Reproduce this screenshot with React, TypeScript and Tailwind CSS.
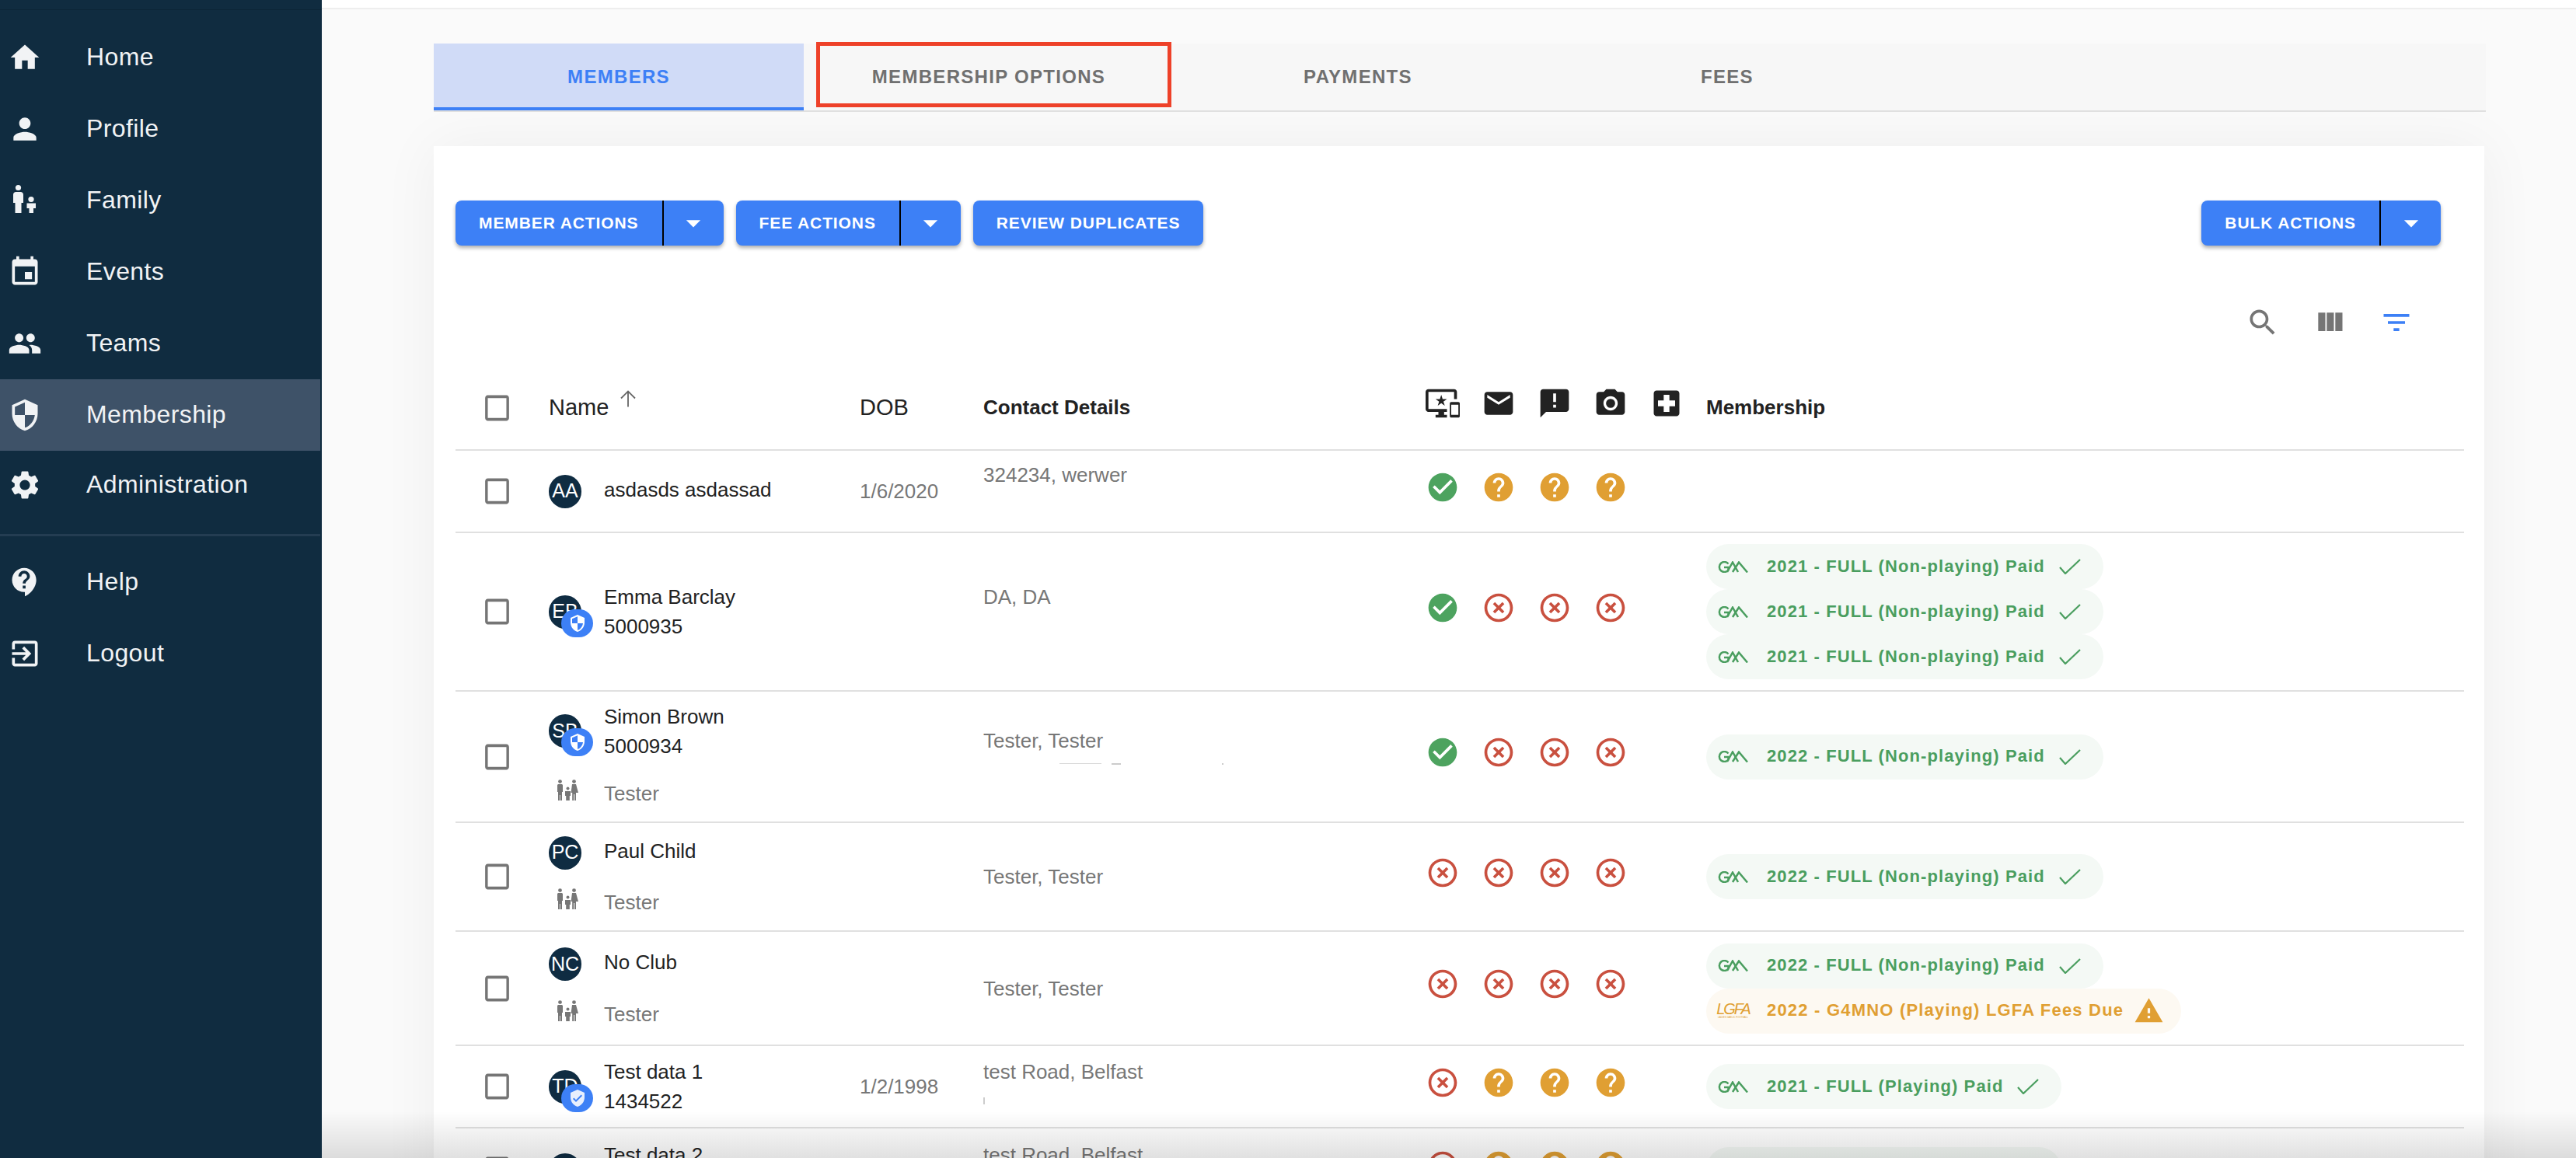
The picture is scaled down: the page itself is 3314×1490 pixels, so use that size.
import React from "react";

const P = {
  home: "M10 20v-6h4v6h5v-8h3L12 3 2 12h3v8z",
  person: "M12 12c2.21 0 4-1.79 4-4s-1.79-4-4-4-4 1.79-4 4 1.79 4 4 4zm0 2c-2.67 0-8 1.34-8 4v2h16v-2c0-2.66-5.33-4-8-4z",
  event: "M17 12h-5v5h5v-5zM16 1v2H8V1H6v2H5c-1.11 0-1.99.9-1.99 2L3 19c0 1.1.89 2 2 2h14c1.1 0 2-.9 2-2V5c0-1.1-.9-2-2-2h-1V1h-2zm3 18H5V8h14v11z",
  people: "M16 11c1.66 0 2.99-1.34 2.99-3S17.66 5 16 5c-1.66 0-3 1.34-3 3s1.34 3 3 3zm-8 0c1.66 0 2.99-1.34 2.99-3S9.66 5 8 5C6.34 5 5 6.34 5 8s1.34 3 3 3zm0 2c-2.33 0-7 1.17-7 3.5V19h14v-2.5c0-2.33-4.67-3.5-7-3.5zm8 0c-.29 0-.62.02-.97.05 1.16.84 1.97 1.97 1.97 3.45V19h6v-2.5c0-2.33-4.67-3.5-7-3.5z",
  security: "M12 1L3 5v6c0 5.55 3.84 10.74 9 12 5.16-1.26 9-6.45 9-12V5l-9-4zm0 10.99h7c-.53 4.12-3.28 7.79-7 8.94V12H5V6.3l7-3.11v8.8z",
  settings: "M19.14 12.94c.04-.3.06-.61.06-.94 0-.32-.02-.64-.07-.94l2.03-1.58c.18-.14.23-.41.12-.61l-1.92-3.32c-.12-.22-.37-.29-.59-.22l-2.39.96c-.5-.38-1.03-.7-1.62-.94l-.36-2.54c-.04-.24-.24-.41-.48-.41h-3.84c-.24 0-.43.17-.47.41l-.36 2.54c-.59.24-1.13.57-1.62.94l-2.39-.96c-.22-.08-.47 0-.59.22L2.74 8.87c-.12.21-.08.47.12.61l2.03 1.58c-.05.3-.09.63-.09.94s.02.64.07.94l-2.03 1.58c-.18.14-.23.41-.12.61l1.92 3.32c.12.22.37.29.59.22l2.39-.96c.5.38 1.03.7 1.62.94l.36 2.54c.05.24.24.41.48.41h3.84c.24 0 .44-.17.47-.41l.36-2.54c.59-.24 1.13-.56 1.62-.94l2.39.96c.22.08.47 0 .59-.22l1.92-3.32c.12-.22.07-.47-.12-.61l-2.01-1.58zM12 15.6c-1.98 0-3.6-1.62-3.6-3.6s1.62-3.6 3.6-3.6 3.6 1.62 3.6 3.6-1.62 3.6-3.6 3.6z",
  help: "M11.5 2C6.81 2 3 5.81 3 10.5S6.81 19 11.5 19h.5v3c4.86-2.34 8-7 8-11.5C20 5.81 16.19 2 11.5 2zm1 14.5h-2v-2h2v2zm0-3.5h-2c0-3.25 3-3 3-5 0-1.1-.9-2-2-2s-2 .9-2 2h-2c0-2.21 1.79-4 4-4s4 1.79 4 4c0 2.5-3 2.75-3 5z",
  exit: "M10.09 15.59L11.5 17l5-5-5-5-1.41 1.41L12.67 11H3v2h9.67l-2.58 2.59zM19 3H5c-1.11 0-2 .9-2 2v4h2V5h14v14H5v-4H3v4c0 1.1.89 2 2 2h14c1.1 0 2-.9 2-2V5c0-1.1-.9-2-2-2z",
  search: "M15.5 14h-.79l-.28-.27C15.41 12.59 16 11.11 16 9.5 16 5.91 13.09 3 9.5 3S3 5.91 3 9.5 5.91 16 9.5 16c1.61 0 3.09-.59 4.23-1.57l.27.28v.79l5 4.99L20.49 19l-4.99-5zm-6 0C7.01 14 5 11.99 5 9.5S7.01 5 9.5 5 14 7.01 14 9.5 11.99 14 9.5 14z",
  columns: "M10 18h5V5h-5v13zm-6 0h5V5H4v13zM16 5v13h5V5h-5z",
  filter: "M10 18h4v-2h-4v2zM3 6v2h18V6H3zm3 7h12v-2H6v2z",
  caret: "M7 10l5 5 5-5z",
  ok: "M12 2C6.48 2 2 6.48 2 12s4.48 10 10 10 10-4.48 10-10S17.52 2 12 2zm-2 15l-5-5 1.41-1.41L10 14.17l7.59-7.59L19 8l-9 9z",
  q: "M12 2C6.48 2 2 6.48 2 12s4.48 10 10 10 10-4.48 10-10S17.52 2 12 2zm1 17h-2v-2h2v2zm2.07-7.75l-.9.92C13.45 12.9 13 13.5 13 15h-2v-.5c0-1.1.45-2.1 1.17-2.83l1.24-1.26c.37-.36.59-.86.59-1.41 0-1.1-.9-2-2-2s-2 .9-2 2H8c0-2.21 1.79-4 4-4s4 1.79 4 4c0 .88-.36 1.68-.93 2.25z",
  x: "M14.59 8L12 10.59 9.41 8 8 9.41 10.59 12 8 14.59 9.41 16 12 13.41 14.59 16 16 14.59 13.41 12 16 9.41 14.59 8zM12 2C6.47 2 2 6.47 2 12s4.47 10 10 10 10-4.47 10-10S17.53 2 12 2zm0 18c-4.41 0-8-3.59-8-8s3.59-8 8-8 8 3.59 8 8-3.59 8-8 8z",
  email: "M20 4H4c-1.1 0-1.99.9-1.99 2L2 18c0 1.1.9 2 2 2h16c1.1 0 2-.9 2-2V6c0-1.1-.9-2-2-2zm0 4l-8 5-8-5V6l8 5 8-5v2z",
  announce: "M20 2H4c-1.1 0-1.99.9-1.99 2L2 22l4-4h14c1.1 0 2-.9 2-2V4c0-1.1-.9-2-2-2zm-7 9h-2V5h2v6zm0 4h-2v-2h2v2z",
  camera: "M12 15.2a3.2 3.2 0 1 0 0-6.4 3.2 3.2 0 0 0 0 6.4zM9 2L7.17 4H4c-1.1 0-2 .9-2 2v12c0 1.1.9 2 2 2h16c1.1 0 2-.9 2-2V6c0-1.1-.9-2-2-2h-3.17L15 2H9zm3 15c-2.76 0-5-2.24-5-5s2.24-5 5-5 5 2.24 5 5-2.24 5-5 5z",
  hospital: "M19 3H5c-1.1 0-1.99.9-1.99 2L3 19c0 1.1.9 2 2 2h14c1.1 0 2-.9 2-2V5c0-1.1-.9-2-2-2zm-1 11h-4v4h-4v-4H6v-4h4V6h4v4h4v4z",
  devices: "M23 11.01L18 11c-.55 0-1 .45-1 1v9c0 .55.45 1 1 1h5c.55 0 1-.45 1-1v-9c0-.55-.45-.99-1-.99zM23 20h-5v-7h5v7zM20 2H2C.89 2 0 2.89 0 4v12c0 1.1.89 2 2 2h7v2H7v2h8v-2h-2v-2h2v-2H2V4h18v5h2V4c0-1.11-.9-2-2-2zm-8.03 7L11 6l-.97 3H7l2.47 1.76-.94 2.91 2.47-1.8 2.47 1.8-.94-2.91L15 9h-3.03z",
  warning: "M1 21h22L12 2 1 21zm12-3h-2v-2h2v2zm0-4h-2v-4h2v4z",
  verified: "M12 1L3 5v6c0 5.55 3.84 10.74 9 12 5.16-1.26 9-6.45 9-12V5l-9-4zm-2 16l-4-4 1.41-1.41L10 14.17l6.59-6.59L18 9l-8 8z",
  box: "M19 5v14H5V5h14m0-2H5c-1.1 0-2 .9-2 2v14c0 1.1.9 2 2 2h14c1.1 0 2-.9 2-2V5c0-1.1-.9-2-2-2z",
};

function Icon({ d, className }: { d: string; className?: string }) {
  return (
    <svg viewBox="0 0 24 24" fill="currentColor" preserveAspectRatio="none" className={className}>
      <path d={d} />
    </svg>
  );
}

function FamilyNavIcon() {
  return (
    <svg viewBox="0 0 44 44" fill="currentColor" className="w-[44px] h-[44px]">
      <circle cx="13.5" cy="5.5" r="3.6" />
      <path d="M7 14.5c0-2 1.4-3.5 3.5-3.5h6c2.1 0 3.5 1.500 3.500 3.500V25h-2.500v13H9.500V25H7z" />
      <circle cx="30" cy="20.500" r="3.600" />
      <path d="M24.500 25.500h11.500V32h-3v6h-5.500v-6h-3z" />
    </svg>
  );
}

function FamilySmall() {
  return (
    <svg viewBox="0 0 28 27" fill="#777777" className="w-[28px] h-[27px] shrink-0">
      <circle cx="4.500" cy="2.600" r="2.400" />
      <path d="M1 7.500c0-1 .8-1.500 1.500-1.500h4c.8 0 1.500.6 1.500 1.500V16H7v11H4.700v-7h-.8v7H2V16H1z" />
      <circle cx="14.500" cy="11.500" r="2" />
      <path d="M11 15h7v6h-1.200v6h-4.600v-6H11z" />
      <circle cx="22.500" cy="2.600" r="2.400" />
      <path d="M20 6h5l3 11h-3v10h-1.800v-8h-1v8H20.200V17H18.500z" />
    </svg>
  );
}

function GaaLogo() {
  return (
    <svg viewBox="0 0 39 15" fill="none" stroke="#4a9e5f" strokeWidth="2.500" className="w-[39px] h-[15px] shrink-0">
      <path d="M13.500 3.500A6.500 6.500 0 1 0 13.500 11.500V8H8" />
      <path d="M12 14L19 1.500L26 14" />
      <path d="M19 14L27 1.500L38 14.500" />
    </svg>
  );
}

function LgfaLogo() {
  return (
    <div className="w-[39px] shrink-0 flex flex-col items-center leading-none text-[#e09f33]">
      <span className="text-[20px] italic font-normal tracking-[-2px] leading-[17px] whitespace-nowrap">LGFA</span>
      <span className="text-[3px] leading-[4px] whitespace-nowrap">LADIES GAELIC FOOTBALL</span>
    </div>
  );
}

const NAV: { label: string; icon: React.ReactNode; h: string; active?: boolean }[] = [
  { label: "Home", icon: <Icon d={P.home} className="w-[44px] h-[44px]" />, h: "h-[92px]" },
  { label: "Profile", icon: <Icon d={P.person} className="w-[44px] h-[44px]" />, h: "h-[92px]" },
  { label: "Family", icon: <FamilyNavIcon />, h: "h-[92px]" },
  { label: "Events", icon: <Icon d={P.event} className="w-[44px] h-[44px]" />, h: "h-[92px]" },
  { label: "Teams", icon: <Icon d={P.people} className="w-[44px] h-[44px]" />, h: "h-[92px]" },
  { label: "Membership", icon: <Icon d={P.security} className="w-[44px] h-[44px]" />, h: "h-[92px]", active: true },
  { label: "Administration", icon: <Icon d={P.settings} className="w-[44px] h-[44px]" />, h: "h-[88px]" },
];

function NavItem({ label, icon, h, active }: { label: string; icon: React.ReactNode; h: string; active?: boolean }) {
  return (
    <div className={`flex items-center pl-[10px] mr-[2px] ${h} ${active ? "bg-[#3e5268]" : ""}`}>
      <span className="w-[44px] flex justify-center">{icon}</span>
      <span className="ml-[57px] text-[32px] tracking-[0.4px] leading-none -mt-[2px]">{label}</span>
    </div>
  );
}

function SplitButton({ label, w }: { label: string; w: string }) {
  return (
    <div className="flex h-[58px] rounded-[8px] bg-[#3d80f6] text-white shadow-[0_3px_5px_rgba(0,0,0,0.32)]">
      <div className="flex items-center px-[30px] text-[21px] font-bold tracking-[0.9px] whitespace-nowrap border-r-2 border-black">{label}</div>
      <div className={`flex items-center justify-center ${w}`}>
        <Icon d={P.caret} className="w-[44px] h-[44px]" />
      </div>
    </div>
  );
}

function Pill({ text, tone = "green" }: { text: string; tone?: "green" | "orange" }) {
  const green = tone === "green";
  return (
    <div className={`flex items-center h-[58px] rounded-[29px] pl-[15px] ${green ? "bg-[#f4f9f5] text-[#4a9e5f] pr-[29px]" : "bg-[#fdf9f2] text-[#e09f33] pr-[22px]"}`}>
      {green ? <GaaLogo /> : <LgfaLogo />}
      <span className={`ml-[24px] mb-[2px] text-[22px] font-bold whitespace-nowrap ${green ? "tracking-[1.1px]" : "tracking-[1.2px]"}`}>{text}</span>
      {green ? (
        <svg viewBox="0 0 28 20" fill="none" stroke="#4a9e5f" strokeWidth="2.200" className="ml-[18px] w-[28px] h-[20px]">
          <path d="M1 11L8 19L27 1" />
        </svg>
      ) : (
        <Icon d={P.warning} className="ml-[13px] w-[39px] h-[39px]" />
      )}
    </div>
  );
}

function Status({ items }: { items: ("ok" | "q" | "x")[] }) {
  const color = { ok: "text-[#4da35f]", q: "text-[#e09f33]", x: "text-[#c9503f]" };
  return (
    <div className="flex items-center gap-[28px] pb-[11px]">
      {items.map((s, i) => (
        <Icon key={i} d={P[s]} className={`w-[44px] h-[44px] ${color[s]}`} />
      ))}
    </div>
  );
}

function Check() {
  return <Icon d={P.box} className="ml-[33px] w-[41px] h-[44px] text-[#757575]" />;
}

function NameCell({ initials, name, id, badge, tester, lift }: { initials: string; name: string; id?: string; badge?: "half" | "check"; tester?: boolean; lift?: boolean }) {
  return (
    <div className={`flex flex-col ${tester ? "gap-[24px]" : ""} ${lift ? "pb-[4px]" : ""}`}>
      <div className="flex items-center gap-[29px] text-[26px] text-[#222222]">
        <div className="relative w-[42px] h-[43px] rounded-full bg-[#0f2c42] text-white text-[25px] flex items-center justify-center shrink-0">
          {initials}
          {badge && (
            <div className="absolute left-[16px] top-[18px] w-[41px] h-[36px] rounded-full bg-[#3d80f6] flex items-center justify-center">
              <Icon d={badge === "half" ? P.security : P.verified} className={`w-[24px] h-[24px] ${badge === "half" ? "text-white" : "text-[#e8effd]"}`} />
            </div>
          )}
        </div>
        <div className={id ? "" : "mb-[5px]"}>
          <div className="h-[38px] leading-[38px] whitespace-nowrap">{name}</div>
          {id && <div className="h-[38px] leading-[38px]">{id}</div>}
        </div>
      </div>
      {tester && (
        <div className="flex items-center text-[26px] text-[#777777] h-[38px]">
          <div className="w-[42px] flex justify-center pl-[6px] pb-[10px]">
            <FamilySmall />
          </div>
          <span className="ml-[29px]">Tester</span>
        </div>
      )}
    </div>
  );
}

function Contact({ first, second, lift }: { first: string; second?: React.ReactNode; lift?: boolean }) {
  return (
    <div className={`text-[26px] text-[#777777] ${lift ? "pb-[4px]" : ""}`}>
      <div className="h-[38px] leading-[38px] whitespace-nowrap">{first}</div>
      {second !== undefined && <div className="h-[38px] overflow-hidden">{second}</div>}
    </div>
  );
}

const gridCols = "grid grid-cols-[120px_400px_159px_569px_361px_1fr] items-center";

function Row({ h, name, dob, contact, status, pills }: { h: string; name: React.ReactNode; dob?: string; contact: React.ReactNode; status: React.ReactNode; pills?: React.ReactNode }) {
  return (
    <div className={`${gridCols} ${h} border-b-2 border-[#e0e0e0]`}>
      <Check />
      {name}
      <div className="text-[26px] text-[#777777]">{dob}</div>
      {contact}
      {status}
      <div className="flex flex-col items-start">{pills}</div>
    </div>
  );
}

const TAB = "w-[476px] h-full flex items-center justify-center text-[24px] font-bold tracking-[1.3px]";

export default function App() {
  return (
    <div className="flex w-full h-[1490px] overflow-hidden font-['Liberation_Sans',Arial,sans-serif]">
      <aside className="w-[414px] h-full shrink-0 bg-[#102c40] text-[#f1f3f5]">
        <div className="h-[13px] border-b border-[#0c2536]" />
        <div className="pt-[15px]">
          {NAV.map((n) => (
            <NavItem key={n.label} {...n} />
          ))}
        </div>
        <div className="mt-[19px] mb-[13px] mr-[2px] h-[3px] bg-[#243d52]" />
        <NavItem label="Help" icon={<Icon d={P.help} className="w-[44px] h-[44px]" />} h="h-[92px]" />
        <NavItem label="Logout" icon={<Icon d={P.exit} className="w-[44px] h-[44px]" />} h="h-[92px]" />
      </aside>

      <main className="relative flex-1 h-full overflow-hidden bg-[#fafafa]">
        <div className="h-[12px] bg-white border-b-2 border-[#eeeeee]" />

        <div className="relative ml-[144px] mr-[116px] mt-[44px] h-[88px] flex bg-[#f7f7f7] border-b-2 border-[#e0e0e0] text-[#707070]">
          <div className={`${TAB} pt-[4px] bg-[#d0dbf7] text-[#3d80f6] border-b-4 border-[#3d80f6]`}>MEMBERS</div>
          <div className={TAB}>MEMBERSHIP OPTIONS</div>
          <div className={`${TAB} pr-[2px]`}>PAYMENTS</div>
          <div className={`${TAB} pr-[4px]`}>FEES</div>
          <div className="absolute left-[492px] -top-[2px] w-[457px] h-[84px] border-[5px] border-[#ee4129]" />
        </div>

        <section className="ml-[144px] mr-[118px] mt-[44px] bg-white pl-[28px] pr-[26px] pt-[70px] h-[1400px] shadow-[0_0_70px_rgba(0,0,0,0.05)]">
          <div className="flex justify-between pr-[30px]">
            <div className="flex gap-[16px]">
              <SplitButton label="MEMBER ACTIONS" w="w-[77px]" />
              <SplitButton label="FEE ACTIONS" w="w-[77px]" />
              <div className="flex items-center h-[58px] px-[30px] rounded-[8px] bg-[#3d80f6] text-white text-[21px] font-bold tracking-[0.9px] shadow-[0_3px_5px_rgba(0,0,0,0.32)]">REVIEW DUPLICATES</div>
            </div>
            <SplitButton label="BULK ACTIONS" w="w-[77px]" />
          </div>

          <div className="flex justify-end gap-[42px] mt-[77px] pr-[65px]">
            <Icon d={P.search} className="w-[44px] h-[44px] text-[#757575]" />
            <Icon d={P.columns} className="w-[44px] h-[44px] text-[#757575]" />
            <Icon d={P.filter} className="w-[44px] h-[44px] text-[#3d80f6]" />
          </div>

          <div className={`${gridCols} h-[143px] pt-[34px] border-b-2 border-[#e0e0e0] text-[#222222]`}>
            <Check />
            <div className="flex items-center text-[29px]">
              <span>Name</span>
              <svg viewBox="0 0 22 22" fill="none" stroke="#666666" strokeWidth="1.800" className="ml-[14px] w-[22px] h-[22px] -translate-y-[12px]">
                <path d="M11 21.500V1.500M2 10.500L11 1.500L20 10.500" />
              </svg>
            </div>
            <div className="text-[29px]">DOB</div>
            <div className="text-[26px] font-bold">Contact Details</div>
            <div className="flex items-center gap-[28px] pb-[12px]">
              <Icon d={P.devices} className="w-[44px] h-[44px]" />
              <Icon d={P.email} className="w-[44px] h-[44px]" />
              <Icon d={P.announce} className="w-[44px] h-[44px]" />
              <Icon d={P.camera} className="w-[44px] h-[44px]" />
              <Icon d={P.hospital} className="w-[44px] h-[44px]" />
            </div>
            <div className="text-[26px] font-bold">Membership</div>
          </div>

          <Row
            h="h-[106px]"
            name={<NameCell initials="AA" name="asdasds asdassad" />}
            dob="1/6/2020"
            contact={<Contact first="324234, werwer" second="" lift />}
            status={<Status items={["ok", "q", "q", "q"]} />}
          />
          <Row
            h="h-[204px]"
            name={<NameCell initials="EB" name="Emma Barclay" id="5000935" badge="half" />}
            contact={<Contact first="DA, DA" second="" />}
            status={<Status items={["ok", "x", "x", "x"]} />}
            pills={
              <>
                <Pill text="2021 - FULL (Non-playing) Paid" />
                <Pill text="2021 - FULL (Non-playing) Paid" />
                <Pill text="2021 - FULL (Non-playing) Paid" />
              </>
            }
          />
          <Row
            h="h-[169px]"
            name={<NameCell initials="SB" name="Simon Brown" id="5000934" badge="half" tester lift />}
            contact={
              <Contact
                lift
                first="Tester, Tester"
                second={
                  <div className="flex h-[2px] mt-[10px] items-start">
                    <span className="ml-[98px] w-[54px] h-[1px] bg-[#d8d8d8]" />
                    <span className="ml-[13px] w-[12px] h-[2px] bg-[#cccccc]" />
                    <span className="ml-[130px] w-[2px] h-[2px] bg-[#cccccc]" />
                  </div>
                }
              />
            }
            status={<Status items={["ok", "x", "x", "x"]} />}
            pills={<Pill text="2022 - FULL (Non-playing) Paid" />}
          />
          <Row
            h="h-[140px]"
            name={<NameCell initials="PC" name="Paul Child" tester />}
            contact={<Contact first="Tester, Tester" />}
            status={<Status items={["x", "x", "x", "x"]} />}
            pills={<Pill text="2022 - FULL (Non-playing) Paid" />}
          />
          <Row
            h="h-[147px]"
            name={<NameCell initials="NC" name="No Club" tester />}
            contact={<Contact first="Tester, Tester" />}
            status={<Status items={["x", "x", "x", "x"]} />}
            pills={
              <>
                <Pill text="2022 - FULL (Non-playing) Paid" />
                <Pill text="2022 - G4MNO (Playing) LGFA Fees Due" tone="orange" />
              </>
            }
          />
          <Row
            h="h-[106px]"
            name={<NameCell initials="TD" name="Test data 1" id="1434522" badge="check" />}
            dob="1/2/1998"
            contact={<Contact first="test Road, Belfast" second={<span className="block mt-[14px] w-[2px] h-[9px] bg-[#cccccc]" />} />}
            status={<Status items={["x", "q", "q", "q"]} />}
            pills={<Pill text="2021 - FULL (Playing) Paid" />}
          />
          <Row
            h="h-[108px]"
            name={<NameCell initials="TD" name="Test data 2" id="1434523" badge="check" />}
            dob="1/2/1998"
            contact={<Contact first="test Road, Belfast" second="" />}
            status={<Status items={["x", "q", "q", "q"]} />}
            pills={<Pill text="2021 - FULL (Playing) Paid" />}
          />
        </section>

        <div className="absolute left-0 right-0 bottom-0 h-[60px] pointer-events-none bg-linear-to-t from-black/[0.12] to-transparent" />
      </main>
    </div>
  );
}
